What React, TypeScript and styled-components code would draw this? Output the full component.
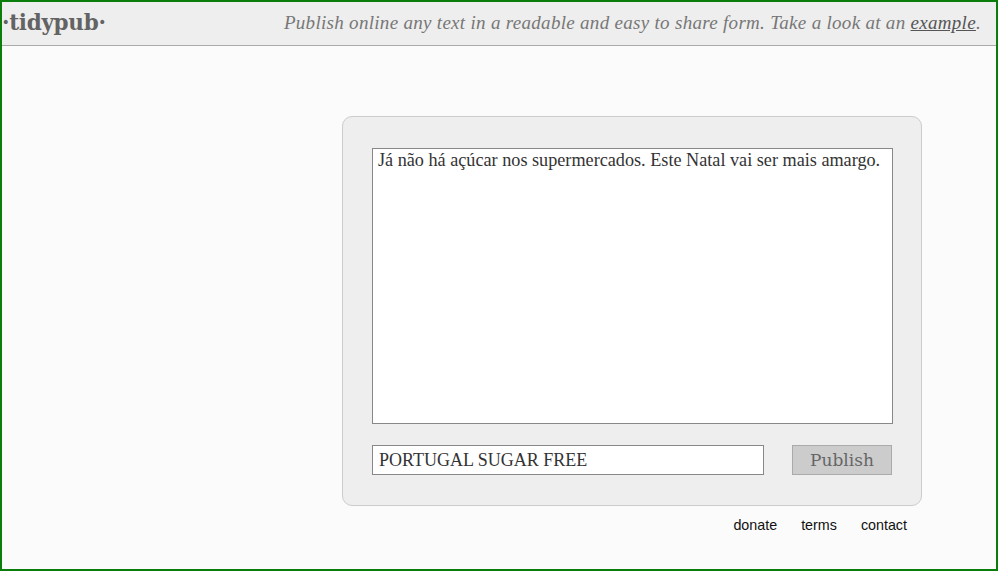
import styled, { createGlobalStyle } from "styled-components";

const GlobalStyle = createGlobalStyle`
  html, body {
    margin: 0;
    padding: 0;
    background: #fbfbfb;
  }
  * {
    box-sizing: border-box;
  }
`;

export default function App() {
  return (
    <>
      <GlobalStyle />
      <Frame>
        <Header>
          <Logo>·tidypub·</Logo>
          <Tagline>
            Publish online any text in a readable and easy to share form. Take a
            look at an <a href="#">example</a>.
          </Tagline>
        </Header>
        <Main>
          <Column>
            <Card>
              <Body
                defaultValue="Já não há açúcar nos supermercados. Este Natal vai ser mais amargo."
              />
              <Bottom>
                <TitleInput defaultValue="PORTUGAL SUGAR FREE" />
                <PublishButton>Publish</PublishButton>
              </Bottom>
            </Card>
            <Footer>
              <FooterLink href="#">donate</FooterLink>
              <FooterLink href="#">terms</FooterLink>
              <FooterLink href="#">contact</FooterLink>
            </Footer>
          </Column>
        </Main>
      </Frame>
    </>
  );
}

const Frame = styled.div`
  width: 998px;
  height: 571px;
  border: 2px solid #0b7d0b;
  background: #fbfbfb;
  display: flex;
  flex-direction: column;
`;

const Header = styled.header`
  height: 44px;
  background: #eeeeee;
  border-bottom: 1px solid #aaaaaa;
  display: flex;
  align-items: center;
  justify-content: space-between;
  padding: 0 15px 0 0;
`;

const Logo = styled.div`
  font-family: "DejaVu Serif", "Liberation Serif", serif;
  font-weight: bold;
  font-size: 21.5px;
  color: #636363;
  letter-spacing: -0.3px;
  margin-top: -2px;
`;

const Tagline = styled.div`
  font-family: "Liberation Serif", serif;
  font-style: italic;
  font-size: 19px;
  letter-spacing: 0.3px;
  color: #777777;
  margin-top: -1px;
  a {
    color: #555555;
    text-decoration: underline;
  }
`;

const Main = styled.main`
  flex: 1;
  padding: 70px 0 0 340px;
`;

const Column = styled.div`
  width: 580px;
  display: flex;
  flex-direction: column;
`;

const Card = styled.div`
  background: #eeeeee;
  border: 1px solid #cccccc;
  border-radius: 10px;
  padding: 31px 28px 30px 29px;
  display: flex;
  flex-direction: column;
  gap: 21px;
`;

const Body = styled.textarea`
  width: 521px;
  height: 276px;
  resize: none;
  border: 1px solid #888888;
  background: #ffffff;
  padding: 1px 5px;
  font-family: "Liberation Serif", serif;
  font-size: 18.2px;
  color: #333333;
  outline: none;
`;

const Bottom = styled.div`
  display: flex;
  align-items: center;
  justify-content: space-between;
  padding-right: 1px;
`;

const TitleInput = styled.input`
  width: 392px;
  height: 30px;
  border: 1px solid #888888;
  background: #ffffff;
  padding: 0 6px;
  font-family: "Liberation Serif", serif;
  font-size: 18px;
  color: #333333;
  outline: none;
`;

const PublishButton = styled.button`
  width: 100px;
  height: 30px;
  background: #cccccc;
  border: 1px solid #aaaaaa;
  font-family: "DejaVu Serif", "Liberation Serif", serif;
  font-size: 17px;
  color: #666666;
  padding: 0;
`;

const Footer = styled.nav`
  display: flex;
  justify-content: flex-end;
  gap: 24px;
  padding: 11px 15px 0 0;
`;

const FooterLink = styled.a`
  font-family: "Liberation Sans", Arial, sans-serif;
  font-size: 14.3px;
  color: #111111;
  text-decoration: none;
`;
